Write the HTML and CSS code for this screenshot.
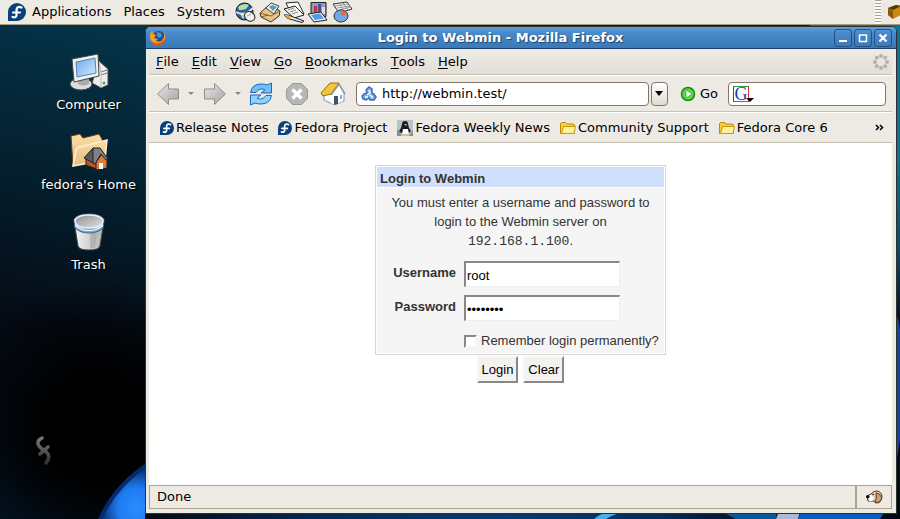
FILE: index.html
```html
<!DOCTYPE html>
<html lang="en">
<head>
    <meta charset="UTF-8">
    <meta name="viewport" content="width=device-width, initial-scale=1.0">
    <title>Login to Webmin</title>
    <link rel="stylesheet" href="styles.css">
</head>
<body>
    <svg width="0" height="0" class="defs">
        <defs>
            <linearGradient id="gray" x1="0" y1="0" x2="1" y2="1"><stop offset="0" stop-color="#e8e8e6"/><stop offset="1" stop-color="#a2a2a0"/></linearGradient>
            <linearGradient id="inside" x1="0" y1="0" x2="1" y2="1"><stop offset="0" stop-color="#8e8e8c"/><stop offset="1" stop-color="#e4e4e2"/></linearGradient>
            <linearGradient id="screen" x1="0" y1="0" x2="1" y2="1"><stop offset="0" stop-color="#6aa9ea"/><stop offset="1" stop-color="#d5eaff"/></linearGradient>
            <linearGradient id="tan" x1="0" y1="0" x2="0" y2="1"><stop offset="0" stop-color="#fbdca6"/><stop offset="1" stop-color="#e6bd80"/></linearGradient>
            <linearGradient id="bin" x1="0" y1="0" x2="1" y2="0"><stop offset="0" stop-color="#f6f6f6"/><stop offset="1" stop-color="#b0b0b0"/></linearGradient>
            <linearGradient id="mark" x1="0" y1="0" x2="0" y2="1"><stop offset="0" stop-color="#777"/><stop offset="1" stop-color="#333"/></linearGradient>
            <radialGradient id="blob" cx=".75" cy=".8" r=".8"><stop offset="0" stop-color="#2a8cff"/><stop offset=".5" stop-color="#1f7bf0"/><stop offset="1" stop-color="#062a6b"/></radialGradient>
            <linearGradient id="floor" x1="0" y1="0" x2="1" y2="0"><stop offset="0" stop-color="#020a14"/><stop offset=".3" stop-color="#062a55"/><stop offset=".6" stop-color="#0a3a72"/><stop offset=".85" stop-color="#062c58"/><stop offset="1" stop-color="#02101f"/></linearGradient>
            <symbol id="fedora" viewBox="0 0 18 18">
                <path d="M0 18V9a9 9 0 1 1 9 9z" fill="#0b3f7c"/>
                <path d="M13.500 4.500c-3-1.500-5 0-5 2.500v5c0 2-1.500 3-4 2M5 9.500h7" fill="none" stroke="#fff" stroke-width="2.200" stroke-linecap="round"/>
            </symbol>
            <symbol id="folder" viewBox="0 0 16 14">
                <path d="M.5 12.500V2.500l1-1h4l1.500 1.500h6.500l1 1v8.500z" fill="#f5cf3e" stroke="#b98b08"/>
                <path d="M1.500 12.500l2-7h12l-1.500 7z" fill="#fff19a" stroke="#c59a15"/>
            </symbol>
        </defs>
    </svg>

    <svg class="wallpaper" viewBox="0 0 900 519" preserveAspectRatio="none">
        <path d="M98 519Q114 483 148 462V519z" fill="#062a6b"/>
        <path d="M102 519Q118 486 148 467V519z" fill="url(#blob)"/>
        <path d="M145 511H750V519H145z" fill="url(#floor)"/>
        <path d="M594 519Q602 512 612 512H630Q614 513 606 519z" fill="#3fb4f5"/>
        <path d="M720 511H776V519H736z" fill="#07589a"/>
        <path d="M776 519L779 511H800L798 519z" fill="#a9b9d6"/>
        <path d="M798 519L801 511H885L880 519z" fill="#0a5cb8"/>
        <path d="M895 312Q899 318 900 330V440L895 470z" fill="#0d469e"/>
    </svg>

    <nav class="panel">
        <button class="panel-item"><svg width="18" height="18"><use href="#fedora"/></svg>Applications</button>
        <button class="panel-item">Places</button>
        <button class="panel-item">System</button>
        <div class="launchers">
            <button aria-label="Web Browser"><svg width="22" height="22" viewBox="0 0 22 22"><circle cx="9.500" cy="10.500" r="8.500" fill="#2861a8" stroke="#111"/><path d="M3 6Q8 1 14 4L11 8L7 9L4 9zM5 13l5-1 1 4-3 2z" fill="#b7dfa0"/><path d="M1 11Q9 16 18 7" fill="none" stroke="#e4e4e4" stroke-width="2"/><ellipse cx="15" cy="15.500" rx="5.500" ry="4.500" fill="#f1f1f1" stroke="#222" transform="rotate(35 15 15)"/><path d="M12 15l4-2" stroke="#999"/></svg></button>
            <button aria-label="Email"><svg width="22" height="22" viewBox="0 0 22 22"><path d="M1 12L10 4l11 6-1 5-8 6-10-5z" fill="#e8c48c" stroke="#3b2a12"/><path d="M7 7l5-5 8 3-5 8z" fill="#e9eef0" stroke="#444"/><path d="M10 6l3-2 5 2-4 4z" fill="#5c9bbd"/><path d="M1 12l11 3 9-5M2 16l7-2" fill="none" stroke="#8a6328"/></svg></button>
            <button aria-label="Word Processor"><svg width="22" height="22" viewBox="0 0 22 22"><path d="M3 2l12-1 6 12-11 3z" fill="#fff" stroke="#222"/><path d="M1 8l11-3 9 9-10 3z" fill="#f4f4f4" stroke="#222"/><path d="M5 9l6-2M7 11l6-2M9 13l6-2" stroke="#888"/><path d="M1 14l4 0 16 6-2 1.500-14-4z" fill="#e8ecf4" stroke="#222"/><path d="M1 14l4 0 3 1.500-2 2.500z" fill="#e5a82c"/></svg></button>
            <button aria-label="Presentation"><svg width="22" height="22" viewBox="0 0 22 22"><path d="M4 1.500h15v14H4z" fill="#9a96bd" stroke="#222"/><path d="M7 5h3v7H7z" fill="#b23a3a"/><path d="M11 3h3v10h-3z" fill="#4d4f9d"/><path d="M15 6h3v7h-3z" fill="#ddd"/><path d="M1 13l13-2 6 8-13 2z" fill="#f2f2f2" stroke="#222"/><path d="M4 14l9-1.500 4 5-9 1.500z" fill="#4d9cf0"/></svg></button>
            <button aria-label="Spreadsheet"><svg width="22" height="22" viewBox="0 0 22 22"><path d="M2 3l14-2 5 7-13 4z" fill="#f4f4f4" stroke="#333"/><path d="M4 5l13-2M6 7l13-2M8 9l12-3M8 2l5 8M12 2l5 7" stroke="#999"/><ellipse cx="10" cy="15" rx="7" ry="6" fill="#72a7e4" stroke="#333"/><path d="M10 15V9a7 6 0 0 1 6 4z" fill="#ee6640"/></svg></button>
        </div>
        <div class="tray">
            <span class="grip"></span>
            <svg width="13" height="20" viewBox="0 0 13 20"><path d="M1 6l8-3 5 1v9l-8 4-5-4z" fill="#c98a10"/><path d="M1 6l5 3v8l-5-4z" fill="#8a5a08"/><path d="M1 6l8-3 5 1-8 4z" fill="#56350a"/></svg>
        </div>
    </nav>

    <div class="desktop">
        <div class="icons">
            <a href="#" class="icon">
                <svg width="40" height="38" viewBox="0 0 40 38"><path d="M30 8l9 8v16l-7 3-9-5z" fill="#ececec" stroke="#444"/><path d="M32 19l6-2M32 22l6-2" stroke="#777"/><path d="M30 8l2 12v15" fill="none" stroke="#bbb"/><circle cx="35" cy="30" r="1.500" fill="#3ab54a"/><ellipse cx="12" cy="31" rx="11" ry="6" fill="#dcdcda" stroke="#444"/><path d="M9 24h11v7q-6 3-11 0z" fill="#aaa"/><path d="M3 6L29 1l1 22L5 29z" fill="#f1f1ee" stroke="#444"/><path d="M7 9l19-4 1 15L8 24z" fill="url(#screen)" stroke="#5583b5"/></svg>
                <span>Computer</span>
            </a>
            <a href="#" class="icon">
                <svg width="40" height="38" viewBox="0 0 40 38"><path d="M2 3l9-2 3 4 16-4 3 5 1 20-30 7z" fill="url(#tan)" stroke="#5e431f"/><path d="M4 33L7 17q1-3 4-3l27-7-2 20z" fill="url(#tan)" stroke="#fff1d0" stroke-width="1.500"/><path d="M17 24L22 18l8 11v8l-13-5z" fill="#c2551c" stroke="#222"/><path d="M27 29L33 21l5 5v9l-11 2z" fill="#e27a36" stroke="#222"/><path d="M15 25l9-10 9 4-7 12z" fill="#55595a" stroke="#222"/><path d="M24 15l7 0 8 11-2 1-5-6-6 10-2-1z" fill="#7e8283" stroke="#222"/><path d="M30 30h4v6h-4z" fill="#fff"/></svg>
                <span>fedora's Home</span>
            </a>
            <a href="#" class="icon">
                <svg width="40" height="38" viewBox="0 0 40 38"><path d="M5 8l4 25q1 4 11 4t11-4L35 8z" fill="url(#bin)" stroke="#444"/><path d="M21 20h7l-2 15h-5z" fill="#999" opacity=".5"/><path d="M5 6q4-5 15-5t15 5l-1 9q-5 5-14 5T6 15z" fill="#7ba4d3" stroke="#48658c"/><path d="M6 11q5 6 14 6t14-6v2q-5 5-14 5T6 13z" fill="#fff"/><path d="M6 7q3-5 14-5t14 5q0 8-14 8T6 7z" fill="url(#inside)" stroke="#e8f1fb" stroke-width="1.500"/></svg>
                <span>Trash</span>
            </a>
            <svg class="infinity" width="18" height="30" viewBox="0 0 18 30"><path d="M6 2Q0 5 3 10Q5 13 9 15Q16 20 10 27M4 18l8-7" fill="none" stroke="url(#mark)" stroke-width="3.500" stroke-linecap="round"/></svg>
        </div>

        <div class="window">
            <header class="titlebar">
                <svg width="18" height="18" viewBox="0 0 18 18"><circle cx="9" cy="9.500" r="7.500" fill="#e0561a"/><circle cx="10" cy="7.500" r="5.500" fill="#1f4f8f"/><path d="M1 5l2-3 1 3 3 1-2 3 4 1-2 2q5 2 7-2 2-3 1-7 3 6-1 9t-8 2Q0 13 1 5z" fill="#f5a024"/><path d="M8 3l4 1 1 3-3 2-2-2z" fill="#4f94cf"/></svg>
                <h1>Login to Webmin - Mozilla Firefox</h1>
                <div class="window-buttons">
                    <button aria-label="Minimize"><svg width="10" height="10"><path d="M1 8h8" stroke="#fff" stroke-width="2"/></svg></button>
                    <button aria-label="Maximize"><svg width="10" height="10"><path d="M1 2h8M1.500 2v7M8.500 2v7M1 8.500h8" stroke="#fff" stroke-width="1.500"/></svg></button>
                    <button aria-label="Close"><svg width="10" height="10"><path d="M1.500 1.500l7 7M8.500 1.500l-7 7" stroke="#fff" stroke-width="2.400"/></svg></button>
                </div>
            </header>

            <div class="frame">
                <nav class="menubar">
                    <button><u>F</u>ile</button>
                    <button><u>E</u>dit</button>
                    <button><u>V</u>iew</button>
                    <button><u>G</u>o</button>
                    <button><u>B</u>ookmarks</button>
                    <button><u>T</u>ools</button>
                    <button><u>H</u>elp</button>
                    <svg class="throbber" width="18" height="18" viewBox="0 0 18 18" fill="#b4b2ae"><circle cx="9" cy="3" r="2"/><circle cx="13.200" cy="4.800" r="2"/><circle cx="15" cy="9" r="2"/><circle cx="13.200" cy="13.200" r="2"/><circle cx="9" cy="15" r="2"/><circle cx="4.800" cy="13.200" r="2"/><circle cx="3" cy="9" r="2"/><circle cx="4.800" cy="4.800" r="2"/></svg>
                </nav>

                <div class="toolbar">
                    <button class="nav-arrow" aria-label="Back"><svg width="24" height="24" viewBox="0 0 24 24"><path d="M1.500 12L12.500 1.500V7h10v10h-10v5.500z" fill="url(#gray)" stroke="#8f8f8c"/></svg><span class="caret"></span></button>
                    <button class="nav-arrow" aria-label="Forward"><svg width="24" height="24" viewBox="0 0 24 24"><path d="M22.500 12L11.500 1.500V7h-10v10h10v5.500z" fill="url(#gray)" stroke="#8f8f8c"/></svg><span class="caret"></span></button>
                    <button aria-label="Reload"><svg width="24" height="24" viewBox="0 0 24 24"><path d="M1.500 10.500Q3 2 12 2q4 0 6 1l4.500-2v10H12l4-3q-5-3-9 2.500z" fill="#6fc0f8" stroke="#1c66bd"/><path d="M22.500 13.500Q21 22 12 22q-4 0-6-1l-4.500 2V13H12l-4 3q5 3 9-2.500z" fill="#8fd2fb" stroke="#1c66bd"/></svg></button>
                    <button class="stop" aria-label="Stop"><svg width="24" height="24" viewBox="0 0 24 24"><path d="M7.500 1.500h9l6 6v9l-6 6h-9l-6-6v-9z" fill="#b6b6b4" stroke="#999"/><path d="M7.500 7.500l9 9M16.500 7.500l-9 9" stroke="#fff" stroke-width="3.500"/></svg></button>
                    <button aria-label="Home"><svg width="26" height="24" viewBox="0 0 26 24"><path d="M4 11l6-2 8-7 6 9v8l-10 4-10-5z" fill="#f8fbff" stroke="#8b98ab"/><path d="M11 12l8-9 4 8v8l-9 4-3-2z" fill="#fff"/><path d="M1 11L10 1h9l-8 11-8 2z" fill="#f4c536" stroke="#986f08"/><path d="M11 13l8-11 6 10" fill="none" stroke="#8b98ab" stroke-width="1.500"/><path d="M14 14h4v8l-4 1z" fill="#4a5260"/><path d="M20 13h2v4h-2z" fill="#7aa7e0"/></svg></button>
                    <div class="location">
                        <svg width="16" height="16" viewBox="0 0 16 16"><path d="M5 4l3-3 3 2v4l2 1 2 3-2 3H9l-1-2-3 2-3-1-1-3 2-2 3-1z" fill="#7fa6e0" stroke="#3f6fbb" stroke-width="1.500"/><path d="M8 4l1 3-3 2M4 11l3 0M9 9l3 3" fill="none" stroke="#fff" stroke-width="1.500"/></svg>
                        <input type="text" aria-label="Location" value="http://webmin.test/">
                    </div>
                    <button class="dropdown" aria-label="Show history"><span class="caret"></span></button>
                    <button class="go"><svg width="16" height="16" viewBox="0 0 16 16"><circle cx="8" cy="8" r="6.500" fill="#5fd648" stroke="#138c18" stroke-width="1.500"/><path d="M6 4v8l6-4z" fill="#fff" stroke="#138c18" stroke-width=".5"/></svg>Go</button>
                    <div class="search">
                        <span class="google">G</span>
                        <input type="text" aria-label="Search">
                    </div>
                </div>

                <nav class="bookmarks">
                    <a href="#"><svg width="14" height="14"><use href="#fedora"/></svg>Release Notes</a>
                    <a href="#"><svg width="14" height="14"><use href="#fedora"/></svg>Fedora Project</a>
                    <a href="#"><svg width="16" height="16" viewBox="0 0 16 16"><path d="M0 0h16v16H0z" fill="#b9c3cc"/><path d="M0 16V9l4 3v4zM12 16l4-6v6z" fill="#8a8f94"/><path d="M5 4q0-3 3-3t3 3l1 4 2 3-3 3H6l-4-3 2-3z" fill="#181d25"/><path d="M6 9h5l1 5H5z" fill="#fff"/><path d="M7 4h3l-1 2zM4 14l3 1H3zM12 14l-3 1h4z" fill="#e5b94d"/></svg>Fedora Weekly News</a>
                    <a href="#"><svg width="16" height="14"><use href="#folder"/></svg>Community Support</a>
                    <a href="#"><svg width="16" height="14"><use href="#folder"/></svg>Fedora Core 6</a>
                    <button aria-label="More bookmarks"><svg width="9" height="7"><path d="M1 1l2.500 2.500L1 6M5 1l2.500 2.500L5 6" fill="none" stroke="#000" stroke-width="1.500"/></svg></button>
                </nav>

                <main class="page">
                    <form>
                        <table class="login">
                            <thead>
                                <tr><th>Login to Webmin</th></tr>
                            </thead>
                            <tbody>
                                <tr>
                                    <td>
                                        <p>You must enter a username and password to login to the Webmin server on <tt>192.168.1.100</tt>.</p>
                                        <div class="fields">
                                            <label for="user">Username</label>
                                            <input type="text" id="user" value="root">
                                            <label for="pass">Password</label>
                                            <input type="password" id="pass" value="password">
                                            <div class="remember"><input type="checkbox" id="save"><label for="save">Remember login permanently?</label></div>
                                        </div>
                                    </td>
                                </tr>
                            </tbody>
                        </table>
                        <div class="actions">
                            <button type="submit">Login</button>
                            <button type="reset">Clear</button>
                        </div>
                    </form>
                </main>

                <footer class="statusbar">
                    <span class="status">Done</span>
                    <span class="beagle"><svg width="17" height="14" viewBox="0 0 17 14"><path d="M1 6l4-2q2-3 6-3 5 1 5 6-1 6-5 6l-3-2H2z" fill="#e8cba8" stroke="#4b3a2b"/><path d="M2 6l4-1 2 4-2 2H3z" fill="#fff"/><path d="M10 3q1 5-1 10 7-1 6.500-6-2-4-5.500-4z" fill="#cda278" stroke="#5a4330"/><circle cx="1.800" cy="6.800" r="1.800" fill="#111"/><circle cx="7" cy="4.500" r=".8" fill="#111"/></svg></span>
                </footer>
            </div>
        </div>
    </div>
</body>
</html>
```

FILE: styles.css
```css
* {
    box-sizing: border-box;
}
body {
    margin: 0;
    min-height: 100vh;
    display: flex;
    flex-direction: column;
    font-family: "DejaVu Sans", sans-serif;
    font-size: 13px;
    line-height: 16px;
    color: #000;
    background: linear-gradient(#067598 30%, #054a72 48%, #03101f 62%, #020a14) right / 10% 100% no-repeat,
        radial-gradient(circle at 95px 430px, #000 50px, transparent 150px),
        linear-gradient(195deg, #05384f 0%, #04202f 35%, #050a14 65%, #031526 100%) left / 150px 100% no-repeat,
        #041d3a;
}
button {
    display: flex;
    align-items: center;
    padding: 0;
    border: none;
    background: none;
    font: inherit;
    color: inherit;
}
input {
    font: inherit;
}
a {
    color: inherit;
    text-decoration: none;
}
.defs {
    position: absolute;
}
.wallpaper {
    position: absolute;
    left: 0;
    top: 0;
    width: 100%;
    height: 100%;
    z-index: -1;
}

/* Top panel */
.panel {
    display: flex;
    align-items: center;
    gap: 12px;
    height: 25px;
    padding-left: 8px;
    background: #edeae3;
    border-bottom: 1px solid #a69c82;
}
.panel-item {
    gap: 6px;
}
.launchers {
    display: flex;
    gap: 2px;
    margin-left: -2px;
}
.tray {
    display: flex;
    align-items: center;
    gap: 6px;
    margin-left: auto;
}
.grip {
    width: 6px;
    height: 24px;
    background: repeating-linear-gradient(#aaa28e 0 1px, #fbfaf7 1px 3px);
}

/* Desktop icons */
.desktop {
    flex: 1;
    display: flex;
    padding: 1px 3px 5px 0;
}
.icons {
    width: 145px;
    flex: none;
    display: flex;
    flex-direction: column;
    padding: 27px 0 0 32px;
    gap: 20px;
}
.icon {
    display: flex;
    flex-direction: column;
    align-items: center;
    gap: 6px;
    color: #fff;
    text-shadow: 1px 1px 1px #000;
    white-space: nowrap;
}
.infinity {
    margin: auto 0 48px 4px;
}

/* Browser window */
.window {
    flex: 1;
    min-width: 0;
    display: flex;
    flex-direction: column;
    border: 1px solid #30302c;
    border-radius: 6px 6px 0 0;
    background: #edeae3;
    overflow: hidden;
}
.titlebar {
    display: flex;
    align-items: center;
    height: 22px;
    padding: 0 4px 0 3px;
    background: linear-gradient(#5c9fdf, #4789ca 30%, #3b79b7);
    border-bottom: 1px solid #1c4068;
}
.titlebar h1 {
    flex: 1;
    margin: 0;
    text-align: center;
    font-size: 13px;
    color: #fff;
    text-shadow: 1px 1px 1px #1d436c;
}
.window-buttons {
    display: flex;
    gap: 2px;
}
.window-buttons button {
    width: 18px;
    height: 18px;
    justify-content: center;
    border: 1px solid #24517f;
    border-radius: 3px;
}
.frame {
    flex: 1;
    display: flex;
    flex-direction: column;
    padding: 0 4px 4px 3px;
}
.menubar {
    display: flex;
    align-items: center;
    gap: 13px;
    height: 26px;
    padding: 0 2px 0 7px;
    background: linear-gradient(#eeebe6, #e3ded8);
    border-bottom: 1px solid #c8c0ae;
}
.menubar u {
    text-underline-offset: 2px;
}
.throbber {
    margin-left: auto;
}

/* Navigation toolbar */
.toolbar {
    display: flex;
    align-items: center;
    gap: 10px;
    height: 37px;
    padding: 0 6px 0 7px;
    border-top: 1px solid #fff;
    border-bottom: 1px solid #c8c0ae;
}
.nav-arrow {
    gap: 8px;
}
.nav-arrow + .nav-arrow {
    margin: 0 -2px 0 -1px;
}
.stop {
    margin: 0 1px 0 2px;
}
.caret {
    border: 3px solid transparent;
    border-top-color: #888;
    border-bottom: none;
}
.location,
.search {
    display: flex;
    align-items: center;
    gap: 5px;
    height: 24px;
    padding: 0 4px;
    border: 1px solid #80766a;
    border-radius: 4px;
    background: #fff;
}
.location {
    flex: 1;
}
.search {
    width: 158px;
}
.location input,
.search input {
    flex: 1;
    min-width: 0;
    padding: 0;
    border: none;
    background: none;
}
.dropdown {
    width: 17px;
    height: 24px;
    margin-left: -8px;
    justify-content: center;
    border: 1px solid #80766a;
    border-radius: 4px;
    background: linear-gradient(#fff, #dfdbd3);
}
.dropdown .caret {
    border-width: 5px 4px 0;
    border-top-color: #000;
}
.go {
    gap: 4px;
    margin-left: 2px;
}
.google {
    position: relative;
    width: 16px;
    height: 16px;
    border: 1px solid #2e9b3a;
    border-left-color: #2548b5;
    border-right-color: #e03020;
    font: 18px/14px "Liberation Serif", serif;
    text-align: center;
    color: #1a3fc0;
}
.google::after {
    content: "";
    position: absolute;
    right: -6px;
    bottom: -1px;
    border: 4px solid transparent;
    border-top-color: #000;
    border-bottom: none;
}

/* Bookmarks toolbar */
.bookmarks {
    display: flex;
    align-items: center;
    gap: 10px;
    height: 31px;
    padding: 0 8px 0 11px;
    border-top: 1px solid #fff;
    border-bottom: 1px solid #c8c0ae;
    white-space: nowrap;
}
.bookmarks a {
    display: flex;
    align-items: center;
    gap: 2px;
}
.bookmarks button {
    margin-left: auto;
}

/* Login page */
.page {
    flex: 1;
    padding-top: 22px;
    background: #fff;
    font-family: "Liberation Sans", sans-serif;
}
.login {
    width: 291px;
    margin: 0 auto;
    border: 1px solid #d6d6d6;
    border-spacing: 1px;
    background: #fff;
    color: #333;
}
.login th {
    height: 20px;
    padding: 3px 3px 0;
    background: #d0dffc;
    text-align: left;
}
.login td {
    padding: 5px 6px 4px;
    background: #f5f5f5;
}
.login p {
    margin: 0 0 10px;
    line-height: 19px;
    text-align: center;
}
.login tt {
    font-family: "Liberation Mono", monospace;
}
.fields {
    display: grid;
    grid-template-columns: 73px 156px;
    column-gap: 8px;
    row-gap: 8px;
}
.fields > label {
    padding-top: 4px;
    text-align: right;
    font-weight: bold;
}
.fields > input {
    height: 26px;
    padding: 1px 1px 0;
    border: 2px solid #888;
    border-right: 1px solid #eee;
    border-bottom: 1px solid #eee;
    background: #fff;
    color: #000;
}
.remember {
    grid-column: 2;
    display: flex;
    align-items: center;
    gap: 4px;
    margin-top: 4px;
    white-space: nowrap;
}
.remember input {
    appearance: none;
    flex: none;
    width: 13px;
    height: 13px;
    margin: 0;
    border: 2px solid #888;
    border-right-color: #f5f5f5;
    border-bottom-color: #f5f5f5;
    background: #fff;
}
.actions {
    display: flex;
    justify-content: center;
    gap: 5px;
    padding-top: 1px;
}
.actions button {
    height: 27px;
    padding: 1px 3px 0;
    border: 2px solid #f8f6f2;
    border-right-color: #888;
    border-bottom-color: #888;
    background: #f4f2ee;
}

/* Status bar */
.statusbar {
    display: flex;
    height: 24px;
}
.status,
.beagle {
    display: flex;
    align-items: center;
    border: 1px solid #aba28e;
}
.status {
    flex: 1;
    padding-left: 7px;
}
.beagle {
    width: 36px;
    justify-content: center;
}
```
